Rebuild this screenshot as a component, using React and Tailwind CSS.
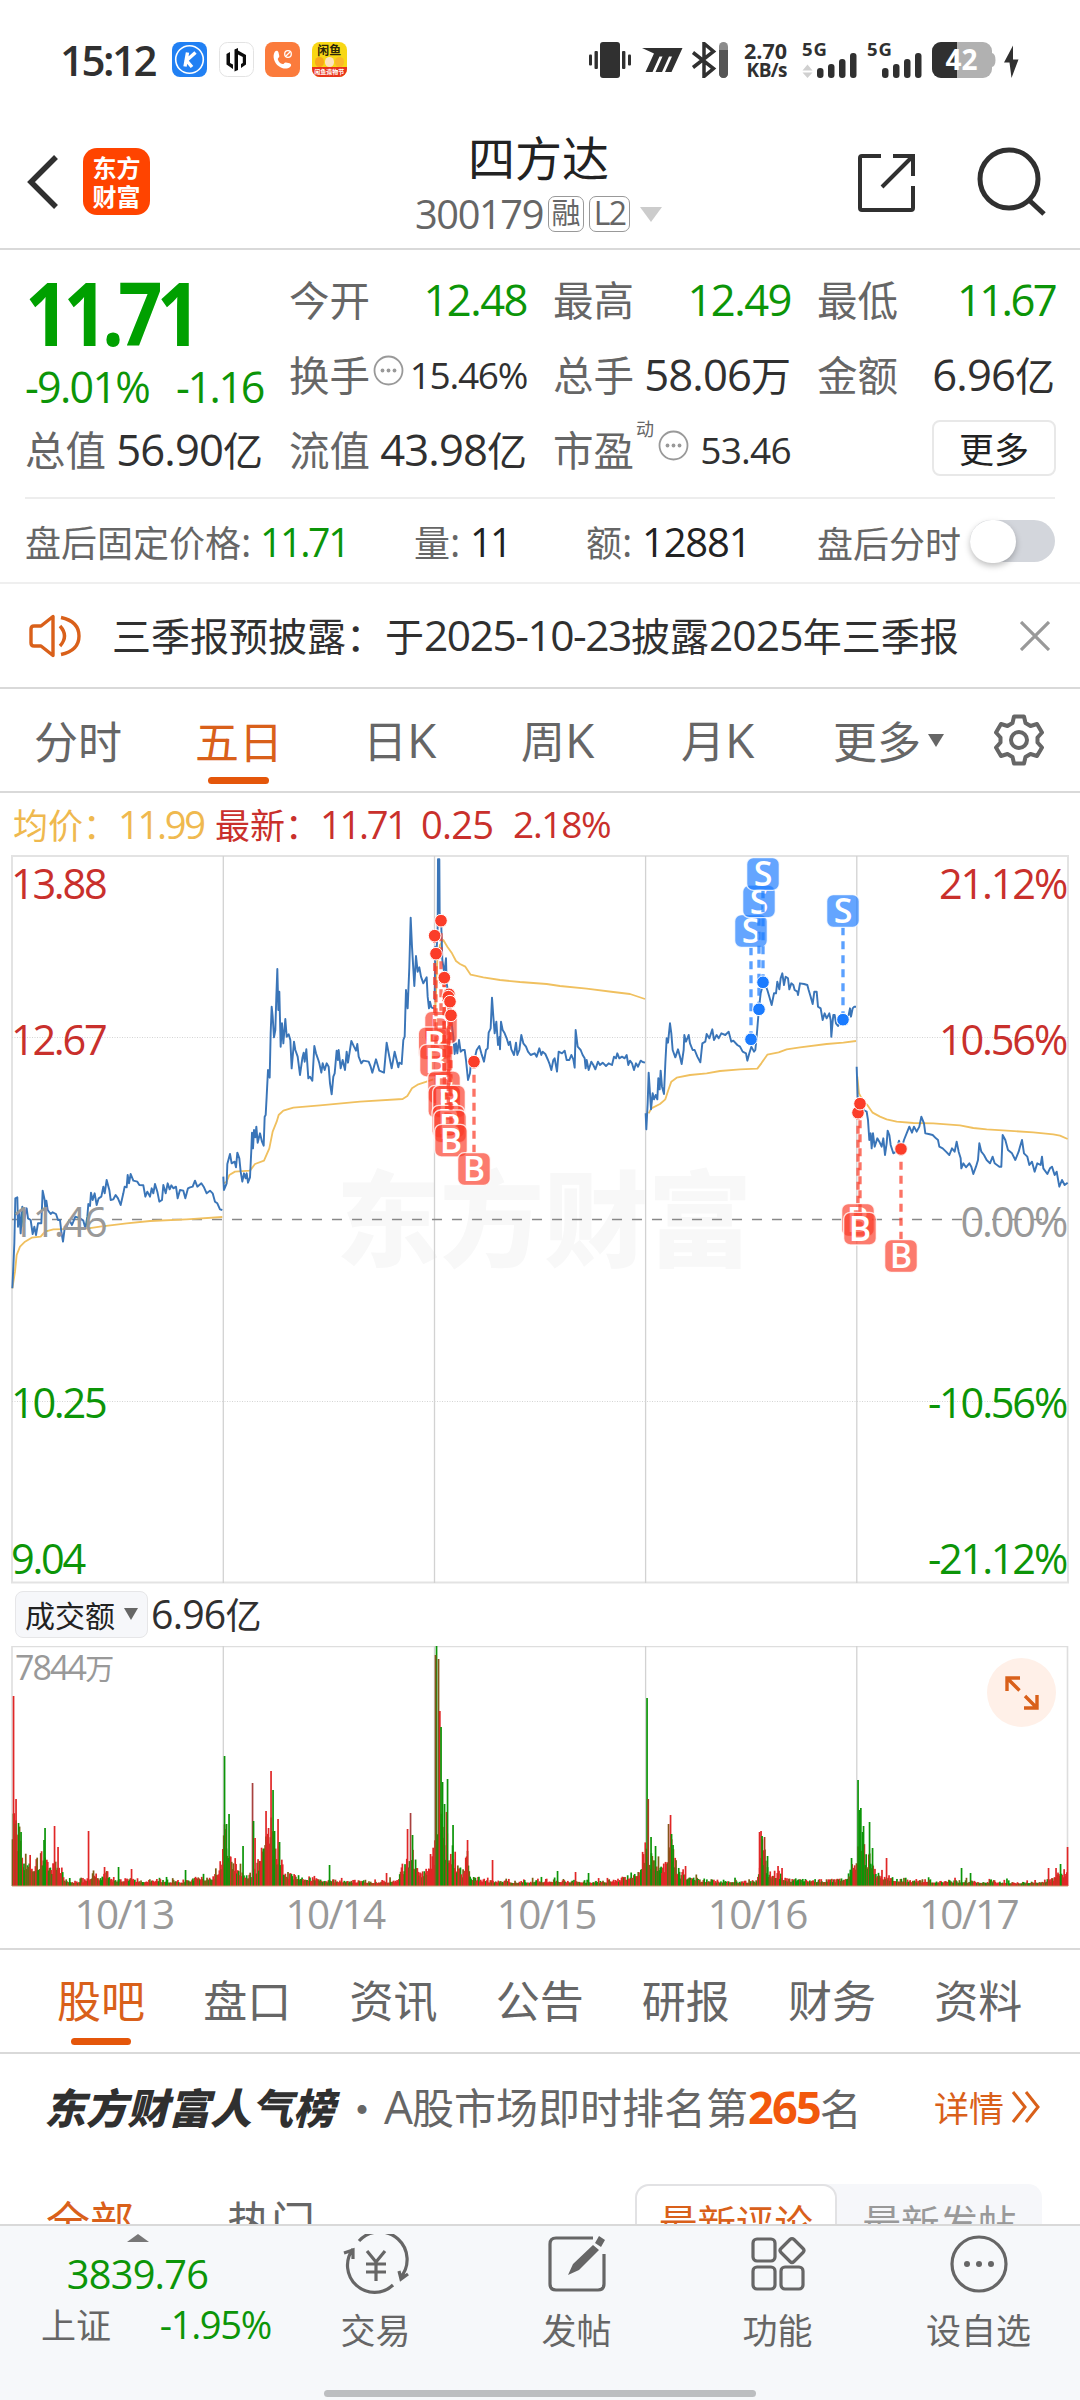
import React from 'react';
import clsx from 'clsx';

// Chart data, [x, y] pairs in chart units (3 units = 1px)
const PRICE = [
  [37,1315,40,1250,43,1180,46,1045,52,1042,54,1130,58,1085,62,1150,67,1070,71,1130,76,1090,80,1075,84,1105,92,1110,98,1152,103,1130,108,1155,114,1120,124,1120,128,1022,134,1050,136,1080,139,1052,143,1080,152,1092,158,1087,168,1092,174,1110,180,1110,184,1145,189,1175,194,1135,200,1130,208,1110,216,1125,226,1100,240,1105,250,1112,256,1135,262,1100,265,1062,270,1068,273,1028,278,1050,284,1030,290,1065,296,1045,304,1040,310,1010,314,1030,320,990,328,1020,332,1050,340,1048,347,1035,354,1045,362,1065,370,1030,374,1010,380,1012,383,975,387,1000,392,972,400,992,412,995,418,1005,430,1006,436,1040,442,1025,450,1040,455,1015,460,1030,465,1002,472,1025,478,1055,486,1050,490,1005,497,1030,503,1000,509,1018,514,1006,520,1015,528,1010,533,1045,540,1020,550,1022,556,1045,564,1015,570,1012,578,1010,585,992,592,1010,604,1000,612,1012,620,1030,630,1022,638,1030,645,1055,652,1060,660,1078,667,1080],
  [670,980,672,1020,680,1000,682,942,690,912,695,940,704,935,708,952,712,908,718,925,722,965,727,995,732,970,737,985,740,970,744,998,750,982,754,900,756,848,759,895,762,840,766,862,769,830,773,878,780,850,786,875,791,887,794,800,797,795,800,740,804,660,809,683,812,550,815,470,818,500,822,562,826,540,829,440,832,357,835,480,838,425,842,590,846,520,850,580,856,507,860,560,866,553,871,570,875,655,882,575,886,600,893,620,900,675,907,625,911,608,914,635,919,598,925,685,930,680,937,692,943,588,948,610,955,630,958,640,964,668,968,640,974,660,980,640,986,650,990,700,995,733,1000,680,1004,670,1010,602,1014,630,1016,600,1022,655,1028,630,1035,660,1040,605,1044,638,1054,573,1062,590,1068,602,1072,582,1076,620,1084,640,1090,632,1106,635,1112,650,1117,668,1128,628,1138,662,1152,668,1160,578,1168,620,1175,655,1184,605,1190,630,1195,652,1198,638,1205,642,1210,570,1214,560,1218,420,1223,475,1228,350,1232,203,1236,290,1243,408,1248,318,1253,365,1258,352,1263,380,1270,400,1280,382,1283,440,1287,475,1290,455,1294,472,1302,475],
  [1304,450,1306,290,1310,300,1313,230,1314,28,1318,28,1319,190,1323,200,1327,330,1333,370,1338,325,1340,400,1345,430,1350,470,1355,520,1360,560,1364,612,1368,580,1372,610,1377,570,1382,605,1388,600,1394,600,1398,630,1404,690,1410,670,1414,620,1422,634,1430,600,1438,588,1444,610,1452,635,1458,600,1463,595,1466,548,1472,535,1476,443,1480,500,1484,550,1489,515,1494,585,1499,560,1500,598,1503,515,1508,540,1514,550,1520,565,1526,585,1530,575,1534,598,1542,615,1548,578,1552,615,1558,600,1564,555,1570,580,1578,590,1584,605,1592,615,1604,610,1610,620,1618,595,1624,615,1628,605,1636,612,1644,630,1648,640,1654,660,1660,630,1664,625,1671,665,1676,605,1686,610,1694,602,1700,630,1708,630,1714,615,1720,628,1724,653,1727,540,1733,590,1742,600,1748,615,1754,625,1757,655,1760,630,1766,660,1774,635,1780,645,1786,658,1794,635,1800,645,1808,638,1818,648,1826,640,1836,645,1842,620,1848,625,1852,610,1858,625,1866,620,1874,625,1880,615,1885,645,1890,632,1896,640,1902,660,1908,640,1914,650,1922,632,1928,636,1935,638],
  [1937,790,1939,838,1943,760,1946,668,1950,730,1953,778,1958,730,1962,748,1967,735,1972,748,1975,685,1979,718,1982,662,1986,710,1992,732,1996,640,2000,565,2004,578,2010,520,2014,550,2018,600,2026,622,2034,598,2040,620,2045,642,2051,600,2053,555,2058,575,2066,555,2070,580,2078,600,2084,600,2092,620,2101,637,2107,580,2116,575,2120,552,2128,565,2137,538,2142,570,2150,555,2156,565,2164,550,2176,555,2186,545,2194,575,2200,572,2212,585,2220,590,2228,605,2238,610,2242,632,2248,610,2254,590,2262,605,2266,600,2270,560,2274,510,2278,465,2282,430,2286,415,2290,380,2294,400,2302,420,2308,440,2315,465,2322,430,2328,430,2332,395,2338,418,2342,385,2347,370,2352,405,2357,380,2364,385,2368,418,2374,400,2380,405,2384,420,2392,425,2394,435,2400,400,2412,402,2422,405,2426,420,2432,440,2438,462,2443,425,2450,425,2454,470,2462,475,2468,510,2474,490,2480,505,2488,490,2492,510,2494,560,2498,515,2500,495,2504,495,2508,520,2514,528,2520,515,2529,508,2540,505,2546,495,2550,475,2553,500,2558,475,2563,470,2568,470],
  [2570,650,2573,740,2580,762,2590,780,2600,785,2604,810,2608,870,2612,850,2615,895,2619,850,2624,890,2632,865,2638,875,2645,890,2650,865,2655,915,2660,880,2663,842,2668,855,2672,885,2680,910,2688,905,2697,872,2704,897,2712,870,2722,845,2728,830,2736,848,2742,830,2750,845,2758,830,2764,800,2772,820,2776,850,2786,852,2798,855,2808,865,2814,870,2818,890,2828,895,2838,905,2848,915,2856,895,2864,905,2870,875,2876,905,2882,925,2884,955,2890,940,2898,952,2908,940,2914,950,2920,972,2928,950,2934,930,2938,880,2944,905,2952,915,2960,930,2970,940,2978,920,2984,940,2998,950,3004,950,3008,855,3016,870,3024,900,3036,910,3046,930,3056,905,3060,890,3066,870,3072,910,3082,920,3088,945,3096,935,3104,965,3112,940,3122,945,3126,920,3130,955,3142,972,3150,955,3156,950,3164,975,3170,965,3178,1010,3186,990,3194,1005,3203,998],
];

const AVERAGE = [
  [37,1315,45,1265,50,1215,60,1190,75,1175,95,1163,122,1160,135,1145,160,1138,260,1136,300,1130,380,1120,450,1113,560,1108,667,1101],
  [672,1000,680,995,688,975,705,965,750,962,765,942,792,932,808,895,818,845,830,815,836,795,850,782,880,773,960,766,1080,755,1208,747,1222,738,1236,715,1255,703,1300,688],
  [1306,480,1312,330,1320,285,1330,270,1342,290,1356,310,1368,333,1380,342,1396,350,1412,374,1450,382,1500,390,1560,396,1640,402,1680,408,1760,416,1840,426,1890,432,1935,447],
  [1946,790,1954,775,1980,762,1996,748,2005,720,2014,695,2030,683,2070,675,2120,670,2160,663,2220,658,2272,656,2284,640,2302,614,2336,607,2360,598,2400,592,2480,582,2530,578,2568,573],
  [2572,680,2577,730,2590,755,2602,765,2618,788,2640,800,2660,808,2690,815,2740,819,2800,820,2880,826,2920,834,2960,838,3020,842,3100,847,3160,853,3180,857,3203,867],
];

// [x, dot y, badge y]
const BUYS = [
  [1323, 212, 533], [1304, 257, 580], [1308, 311, 632], [1332, 383, 712], [1333, 383, 755], [1347, 433, 755],
  [1345, 440, 815], [1350, 455, 829], [1353, 496, 872], [1422, 635, 957], [2574, 788, 1110], [2580, 761, 1136], [2703, 897, 1218],
];
const SELLS = [[2253, 568, 243], [2277, 478, 154], [2289, 397, 72], [2529, 509, 183]];

// Turnover: general level along the axis, then the bars that stand out
const LEVELS = [
  [12,95],[16,85],[20,50],[24,33],[36,28],[44,40],[48,18],[52,20],[58,30],[62,14],[66,5],[80,4],[88,8],[92,16],[98,8],[104,14],[108,14],[112,6],[130,8],[140,5],[160,6],[180,4],[195,8],[210,9],[214,14],[220,28],[222,50],[226,70],[230,40],[236,26],[242,18],[250,12],[258,30],[264,50],[270,70],[276,50],[280,28],[288,14],[300,10],[320,6],[350,5],[380,4],[398,6],[403,25],[412,40],[416,20],[424,14],[434,45],[440,120],[444,45],[450,50],[456,28],[462,14],[466,40],[471,10],[490,5],[520,4],[550,6],[600,4],[620,7],[630,14],[640,22],[645,50],[650,35],[656,28],[664,25],[670,60],[674,30],[680,14],[700,6],[740,4],[757,5],[760,50],[764,40],[768,14],[778,14],[790,6],[840,6],[848,14],[857,40],[862,50],[868,30],[872,22],[880,12],[900,6],[930,5],[960,5],[980,4],[1020,3],[1050,6],[1060,15],[1067,20],
];
const UP = '#e02727';
const DOWN = '#0c9508';
const SPIKES = [
  [13,190,UP],[15.5,87,UP],[18,63,DOWN],[20.5,54,DOWN],[43.5,46,DOWN],[44.5,58,DOWN],[54,60,UP],[57.5,39,UP],[88,55,UP],[104,19,UP],[118,19,DOWN],[131,17,UP],[185,16,DOWN],
  [224,130,DOWN],[226,62,DOWN],[228.5,72,DOWN],[242.5,40,DOWN],[252,103,'#a8413f'],[253,65,DOWN],[254.5,48,UP],[265.5,75,UP],[268,58,UP],[270.5,115,UP],[272.5,96,DOWN],[274,55,DOWN],[277.5,67,UP],[279,44,DOWN],[329,21,DOWN],[386,13,UP],[407,57,UP],[410,73,'#a8413f'],[412,51,DOWN],
  [436,240,DOWN],[435,231,'#86551c'],[438,227,'#86551c'],[439.3,175,UP],[440.5,159,DOWN],[442,104,DOWN],[444,82,DOWN],[446,74,UP],[447,107,DOWN],[452.5,61,DOWN],[467,46,UP],[492,26,UP],[557,15,DOWN],[575,14,UP],[588,13,DOWN],
  [646.5,188,DOWN],[647.7,87,'#b23a22'],[650.5,49,DOWN],[655,40,DOWN],[668,62,'#86551c'],[670,71,UP],[671,52,DOWN],[672.5,41,DOWN],[685,20,UP],
  [759,54,UP],[760.5,55,UP],[761.5,50,DOWN],[764,49,'#b23a22'],[767,30,DOWN],[777.5,20,UP],[781.5,18,UP],
  [851,28,DOWN],[857.5,106,DOWN],[859,76,DOWN],[860.3,78,DOWN],[862,54,DOWN],[863,60,DOWN],[869,64,DOWN],[872,38,DOWN],[886,28,UP],[961,18,DOWN],[970,13,DOWN],[1048,18,UP],[1055.5,18,UP],[1060,22,DOWN],[1067,39,UP],
];

function levelAt(x) {
  const i = Math.max(1, LEVELS.findIndex(p => p[0] >= x));
  const [x0, y0] = LEVELS[i - 1];
  const [x1, y1] = LEVELS[i];
  return y0 + ((y1 - y0) * (x - x0)) / (x1 - x0);
}

function buildBars() {
  const bars = [];
  let seed = 7;
  const rand = () => {
    seed = (seed * 16807) % 2147483647;
    return seed / 2147483647;
  };
  for (let x = 12; x < 1067; x += 0.88) {
    const r = rand();
    const extra = rand() > 0.9 ? 4 : 1;
    const h = Math.max(2, levelAt(x) * (0.45 + 0.6 * r * r) + extra);
    bars.push([x, h, rand() > 0.52 ? UP : rand() > 0.45 ? DOWN : '#7b5f14']);
  }
  return bars.concat(SPIKES);
}
const BARS = buildBars();

const hasCjk = s => /[\u3000-\u9fff\uff00-\uffef]/.test(s);

// Runs with several narrow ones are set closer
function tracking(s) {
  const ones = s.split('1').length - 1;
  if (ones > 1 && s.length < 7) return 'tracking-[-0.06em]';
  return ones > 0 ? 'tracking-[-0.035em]' : 'tracking-[-0.02em]';
}

// Latin runs are set a little larger than the Chinese beside them
function Mix({ children, className }) {
  const parts = String(children).match(/[\u3000-\u9fff\uff00-\uffef]+|[^\u3000-\u9fff\uff00-\uffef]+/g) || [];
  return (
    <span className={clsx('whitespace-pre leading-none', className)}>
      {parts.map((p, i) =>
        hasCjk(p) ? p : <span key={i} className={clsx("font-['Open_Sans',sans-serif] text-[1.09em]", tracking(p))}>{p}</span>
      )}
    </span>
  );
}

function StatusBar() {
  return (
    <div className="h-[121px] shrink-0 flex items-start pt-[42px] pl-[60px] pr-[61px] text-[#303030]">
      <span className="w-[112px] font-['Open_Sans',sans-serif] font-semibold text-[42px] leading-[35px] tracking-[-0.06em]">15:12</span>
      <div className="flex gap-[11.6px]">
        <svg width="35" height="35" viewBox="0 0 35 35">
          <rect width="35" height="35" rx="8" fill="#2180f3" />
          <circle cx="17.5" cy="17.5" r="13.8" fill="none" stroke="#fff" strokeWidth="1.600" />
          <path d="M15.500 10.500 13 24.500M23.500 10.500 14.500 18.500l5.500 6.500" fill="none" stroke="#fff" strokeWidth="3.400" />
        </svg>
        <svg width="35" height="35" viewBox="0 0 35 35">
          <rect x=".5" y=".5" width="34" height="34" rx="8" fill="#fff" stroke="#e3e3e3" />
          <path d="M7.500 12 11 10v11l3 1.500V27l-6.500-4.500zM15.500 7.500 19 6v22l-3.500 1.500zM19 8.500l8 4.500v9.500l-5 3.500v-4l1.800-1V15L19 12.500z" fill="#0c0c0c" />
        </svg>
        <svg width="35" height="35" viewBox="0 0 35 35">
          <rect width="35" height="35" rx="8" fill="#fb7b3c" />
          <path d="M10 9.500c1.500-1.500 3-1 3.500 1l.8 3.500c.3 1.500-1.800 2-1.500 3.200.6 2.600 2.500 4.400 4.800 4.800 1.300.3 1.700-1.800 3.200-1.600l3.800.8c2 .5 2 2.600.5 3.800-3 2.400-7.600 2-11.200-.7C9 21 7 14 10 9.500z" fill="#fff" />
          <circle cx="23" cy="12" r="3.300" fill="none" stroke="#fff" strokeWidth="1.300" />
          <path d="M21 14l4-4" stroke="#fff" strokeWidth="1.200" />
        </svg>
        <div className="w-[35px] h-[35px] rounded-[8px] overflow-hidden bg-[#f8d715] flex flex-col items-center leading-none">
          <span className="mt-[2px] text-[12px] font-bold text-[#2d2608]">闲鱼</span>
          <div className="flex gap-[1px] mt-px">
            <div className="w-[9px] h-[10px] rounded-full bg-[#f9a61c]" />
            <div className="w-[9px] h-[10px] rounded-full bg-[#fde3c0]" />
            <div className="w-[9px] h-[10px] rounded-full bg-[#fbb72a]" />
          </div>
          <span className="w-full h-[10px] bg-[#e8331c] text-center text-[6px] leading-[9px] font-bold text-white whitespace-nowrap">闲鱼造物节</span>
        </div>
      </div>

      <svg className="ml-auto" width="140" height="36" viewBox="588 42 140 36" fill="#303030">
        <rect x="600" y="42" width="20" height="36" rx="3" />
        <rect x="589" y="54.500" width="3" height="11" rx="1" />
        <rect x="594.500" y="51" width="3.400" height="18" rx="1" />
        <rect x="622" y="51" width="3.400" height="18" rx="1" />
        <rect x="628" y="54.500" width="3" height="11" rx="1" />
        <path d="M642 48h40.500l-11 24h-6.500l7-15.500h-3l-7 15.500h-6.500l7-15.500h-3l-7 15.500h-7l8.500-18.500z" />
        <path d="M693 52.500l20.500 16L704 76.500V43.500l9.500 8L693 67.500" fill="none" stroke="#303030" strokeWidth="3.500" />
        <rect x="719" y="42" width="9" height="36" rx="4.500" fill="#8b8b8b" />
        <path d="M719 50h9v23.500a4.500 4.500 0 0 1-9 0z" fill="#555" />
      </svg>
      <div className="w-[45px] ml-[14px] flex flex-col items-end font-['Open_Sans',sans-serif] font-bold text-[21.500px] leading-[17px]">
        <span>2.70</span>
        <span className="text-[19px] leading-[23px] tracking-[-0.03em]">KB/s</span>
      </div>
      {[true, false].map(arrows => (
        <svg key={String(arrows)} className={clsx('overflow-visible', arrows ? 'ml-[15px]' : 'ml-[9px]')} width="56" height="36" viewBox="803 42 56 36" fill="#303030">
          <text x="803" y="56" fontSize="18.500" fontWeight="700" fontFamily="Open Sans" textLength="25">5G</text>
          {arrows && <path d="M808.500 64.500l5 6h-10zM808.500 78l5-5.500h-10z" fill="#d0d0d0" />}
          <rect x="818" y="68" width="6.500" height="10" rx="3" />
          <rect x="829" y="64" width="6.500" height="14" rx="3" />
          <rect x="840" y="59" width="6.500" height="19" rx="3" />
          <rect x="851" y="53" width="6.500" height="25" rx="3" />
        </svg>
      ))}
      <svg className="ml-[9px] shrink-0 overflow-visible" width="87" height="36" viewBox="933 42 87 36">
        <rect x="933" y="42" width="60" height="36" rx="9" fill="#b1b1b1" />
        <path d="M993 53q3.500 1 3.500 7t-3.500 7z" fill="#b1b1b1" />
        <path d="M958 42v36h-16a9 9 0 0 1-9-9V51a9 9 0 0 1 9-9z" fill="#303030" />
        <text x="962.500" y="70" textAnchor="middle" fontSize="28" fontWeight="700" fontFamily="Open Sans" fill="#fff">42</text>
        <path d="M1014 45.500l-9 17h5.500l2 15.500 7-18.500h-5.500z" fill="#303030" />
      </svg>
    </div>
  );
}

function Header() {
  return (
    <div className="h-[129px] shrink-0 flex items-center pl-[26px] pr-[34px] border-b-2 border-[#d9d9d9]">
      <svg width="34" height="56" viewBox="0 0 34 56" className="mt-[-5px]">
        <path d="M30 3 5 28l25 25" fill="none" stroke="#303030" strokeWidth="5.500" />
      </svg>
      <div className="w-[67px] h-[67px] ml-[23px] mt-[-7px] rounded-[14px] bg-[#ff4400] flex flex-col items-center justify-center text-white text-[24px] leading-[29px] font-bold">
        <span>东方</span>
        <span>财富</span>
      </div>
      <div className="flex-1 flex flex-col items-center pl-[69px]">
        <span className="mt-[-9px] text-[47px] leading-[60px] text-[#222]">四方达</span>
        <div className="flex items-center gap-[5px] pt-[8px] text-[#666]">
          <Mix className="text-[36.500px]">300179</Mix>
          <span className="w-[36px] h-[36px] border-[1.5px] border-[#999] rounded-[7px] text-[29px] leading-[29px] text-center">融</span>
          <span className="w-[41px] h-[36px] border-[1.5px] border-[#999] rounded-[7px] font-['Open_Sans',sans-serif] text-[32px] leading-[31px] tracking-[-0.05em] text-center">L2</span>
          <svg className="ml-[5px]" width="22" height="15" viewBox="0 0 22 15"><path d="M0 0h22L11 15z" fill="#ccc" /></svg>
        </div>
      </div>
      <svg width="188" height="68" viewBox="858 147 188 68" fill="none" stroke="#303030" strokeWidth="4" className="mt-[-6px] overflow-visible">
        <path d="M881 155h-19q-2 0-2 2v50q0 2 2 2h49q2 0 2-2v-22M893 155h20v20M913 155l-31 31" />
        <circle cx="1009" cy="178" r="29" strokeWidth="5" />
        <path d="M1030 200l14 13" strokeWidth="5" />
      </svg>
    </div>
  );
}

function Hint() {
  return (
    <svg width="31" height="31" viewBox="0 0 31 31" className="shrink-0 ml-[3px] -translate-y-[4px]">
      <circle cx="15.500" cy="15.500" r="14" fill="none" stroke="#999" strokeWidth="1.800" />
      <circle cx="9.500" cy="15.500" r="1.900" fill="#999" />
      <circle cx="15.500" cy="15.500" r="1.900" fill="#999" />
      <circle cx="21.500" cy="15.500" r="1.900" fill="#999" />
    </svg>
  );
}

function Stat({ label, value, green, hint, sup }) {
  return (
    <div className="h-[75px] flex items-center whitespace-nowrap">
      <span className="text-[40.500px] leading-none text-[#666]">{label}</span>
      {sup && <span className="text-[18px] leading-none text-[#666] self-start mt-[7px] ml-[2px] mr-px">{sup}</span>}
      {hint && <Hint />}
      <Mix className={clsx('ml-auto', hint ? 'text-[34px]' : 'text-[40px]', green ? 'text-[#0c9508]' : 'text-[#303030]')}>{value}</Mix>
    </div>
  );
}

function Quote() {
  return (
    <div className="h-[249px] shrink-0 pt-[12px] mx-[25px] grid grid-cols-4 gap-x-[26px] border-b-2 border-[#ededed]">
      <div>
        <div className="h-[96px] flex items-center pt-[3px] origin-left scale-x-[0.88] font-['Open_Sans',sans-serif] font-bold text-[88px] leading-none tracking-[-0.075em] text-[#00a000]">11.71</div>
        <div className="h-[54px] flex items-center justify-between pt-[2px] text-[#0c9508] text-[43px] leading-none font-['Open_Sans',sans-serif]">
          <span className="tracking-[-0.04em]">-9.01%</span>
          <span className="tracking-[-0.055em]">-1.16</span>
        </div>
        <Stat label="总值" value="56.90亿" />
      </div>
      <div>
        <Stat label="今开" value="12.48" green />
        <Stat label="换手" value="15.46%" hint />
        <Stat label="流值" value="43.98亿" />
      </div>
      <div>
        <Stat label="最高" value="12.49" green />
        <Stat label="总手" value="58.06万" />
        <Stat label="市盈" value="53.46" hint sup="动" />
      </div>
      <div>
        <Stat label="最低" value="11.67" green />
        <Stat label="金额" value="6.96亿" />
        <div className="h-[75px] flex items-center justify-end">
          <button className="w-[124px] h-[56px] mt-[-4px] mr-[-1px] border-2 border-[#e8e8e8] rounded-[8px] text-[35px] leading-none text-[#222]">更多</button>
        </div>
      </div>
    </div>
  );
}

function AfterHours() {
  return (
    <div className="h-[85px] shrink-0 flex items-center pl-[25px] pr-[25px] pt-[2px] border-b-2 border-[#efefef] text-[36px] text-[#666]">
      <Mix className="w-[235px]">盘后固定价格:</Mix>
      <Mix className="w-[154px] text-[#0c9508]">11.71</Mix>
      <Mix className="w-[56px]">量:</Mix>
      <Mix className="w-[116px] text-[#222]">11</Mix>
      <Mix className="w-[56px]">额:</Mix>
      <span className="w-[175px] font-['Open_Sans',sans-serif] text-[40px] leading-none tracking-[-0.03em] text-[#222]">12881</span>
      <span className="leading-none">盘后分时</span>
      <div className="w-[85px] h-[42px] ml-auto mt-[-2px] rounded-full bg-[#d3d6dc]">
        <div className="w-[46px] h-[43px] rounded-full bg-white shadow-[0_3px_6px_rgba(0,0,0,0.25)]" />
      </div>
    </div>
  );
}

function Notice() {
  return (
    <div className="h-[105px] shrink-0 flex items-center pl-[28px] pr-[30px] border-b-2 border-[#d9d9d9]">
      <svg width="54" height="46" viewBox="0 0 54 46" fill="none" stroke="#d9601a" strokeWidth="3.400">
        <path d="M25 3.500v39L13 33H6q-3 0-3-3V16q0-3 3-3h7z" strokeLinejoin="round" />
        <path d="M32 13q9 10 0 20M33 4.500q18 4 18 18.500T33 41.500" />
      </svg>
      <Mix className="ml-[30px] text-[39px] text-[#303030]">三季报预披露：于2025-10-23披露2025年三季报</Mix>
      <svg className="ml-auto" width="30" height="30" viewBox="0 0 30 30"><path d="M1 1l28 28M29 1 1 29" stroke="#999" strokeWidth="3.200" /></svg>
    </div>
  );
}

function PeriodTabs() {
  return (
    <div className="h-[104px] shrink-0 flex items-center pl-[34px] pr-[35px] border-b-2 border-[#d9d9d9] text-[44px] text-[#666]">
      <span className="w-[161px] leading-none">分时</span>
      <div className="w-[168px] h-full flex flex-col">
        <span className="h-[88px] flex items-center pt-[14px] text-[#d9601a] leading-none">五日</span>
        <div className="w-[61px] h-[7px] ml-[13px] rounded-full bg-[#e4560a]" />
      </div>
      <Mix className="w-[158px]">日K</Mix>
      <Mix className="w-[160px]">周K</Mix>
      <Mix className="w-[152px]">月K</Mix>
      <span className="leading-none">更多</span>
      <svg className="ml-[7px]" width="16" height="13" viewBox="0 0 16 13"><path d="M0 0h16L8 13z" fill="#666" /></svg>
      <svg className="ml-auto" width="52" height="52" viewBox="0 0 52 52" fill="none" stroke="#666" strokeWidth="4" strokeLinejoin="round">
        <path d="M21 2.500h10l1.500 6.500 5 3 6.500-2 5 8.500-4.500 5v5l4.500 5-5 8.500-6.500-2-5 3-1.500 6.500H21L19.500 43l-5-3L8 42l-5-8.500 4.500-5v-5L3 18.500 8 10l6.500 2 5-3z" />
        <circle cx="26" cy="26" r="8" />
      </svg>
    </div>
  );
}

function Legend() {
  return (
    <div className="h-[61px] shrink-0 flex items-center pt-px pl-[13px] text-[35px] text-[#c9302c]">
      <Mix className="w-[202px] text-[#efb94f]">均价：11.99</Mix>
      <Mix className="w-[206px]">最新：11.71</Mix>
      <Mix className="w-[92px]">0.25</Mix>
      <Mix className="text-[34px]">2.18%</Mix>
    </div>
  );
}

function AxisLabel({ x, y, fill, end, children }) {
  return (
    <text x={x} y={y} fill={fill} fontSize="41.500" fontFamily="Open Sans" letterSpacing={end ? -2.2 : -2.3} textAnchor={end ? 'end' : 'start'}>
      {children}
    </text>
  );
}

function Marker({ x, dot, y, letter, color }) {
  const edge = y > dot ? y - 49 : y + 49;
  return (
    <g>
      <path d={`M${x} ${edge}V${dot}`} stroke={color} strokeOpacity="0.72" strokeWidth="10" strokeDasharray="24 18" />
      <rect x={x - 49} y={y - 49} width="98" height="98" rx="20" fill={color} fillOpacity="0.68" stroke="#fff" strokeOpacity="0.8" strokeWidth="4" />
      <text x={x} y={y + 37} textAnchor="middle" fontSize="102" fontWeight="600" fontFamily="Open Sans" fill="#fff">{letter}</text>
    </g>
  );
}

function PriceChart() {
  return (
    <svg className="block shrink-0" width="1080" height="732" viewBox="0 854 1080 732">
      <text x="336" y="1259" fontSize="104" fontWeight="900" fontFamily="Noto Sans CJK SC" fill="#f8f8f8">东方财富</text>
      <rect x="12" y="856" width="1056" height="726.500" fill="none" stroke="#e3e3e3" strokeWidth="2" />
      {[223.3, 434.5, 645.6, 856.8].map(x => <path key={x} d={`M${x} 856v727`} stroke="#d2d2d2" strokeWidth="1.300" />)}
      {[1037.5, 1401.5].map(y => <path key={y} d={`M12 ${y}h1056`} stroke="#d4d4d4" strokeDasharray="1 1.500" />)}
      <path d="M12 1219.500h1056" stroke="#888" strokeWidth="1.500" strokeDasharray="10 10" />
      <g transform="translate(0 850) scale(.33333)" fill="none" strokeLinejoin="round">
        {AVERAGE.map((p, i) => <polyline key={i} points={p.join(' ')} stroke="#f0c05f" strokeWidth="5.500" />)}
        {PRICE.map((p, i) => <polyline key={i} points={p.join(' ')} stroke="#3a75b8" strokeWidth="5.800" />)}
        {BUYS.map(([x, dot, y], i) => <Marker key={i} x={x} dot={dot} y={y} letter="B" color="#fb3d29" />)}
        {SELLS.map(([x, dot, y], i) => <Marker key={i} x={x} dot={dot} y={y} letter="S" color="#1a7bff" />)}
        {BUYS.map(([x, y], i) => <circle key={i} cx={x} cy={y} r="19" fill="#fb3d29" stroke="#fff" strokeWidth="3" />)}
        {SELLS.map(([x, y], i) => <circle key={i} cx={x} cy={y} r="19" fill="#1a7bff" stroke="#fff" strokeWidth="3" />)}
      </g>
      <AxisLabel x="11" y="898.500" fill="#c9302c">13.88</AxisLabel>
      <AxisLabel x="11" y="1054.500" fill="#c9302c">12.67</AxisLabel>
      <AxisLabel x="11" y="1237" fill="#999">11.46</AxisLabel>
      <AxisLabel x="11" y="1418" fill="#0c9508">10.25</AxisLabel>
      <AxisLabel x="11" y="1574" fill="#0c9508">9.04</AxisLabel>
      <AxisLabel end x="1066" y="898.500" fill="#c9302c">21.12%</AxisLabel>
      <AxisLabel end x="1066" y="1054.500" fill="#c9302c">10.56%</AxisLabel>
      <AxisLabel end x="1066" y="1237" fill="#999">0.00%</AxisLabel>
      <AxisLabel end x="1066" y="1418" fill="#0c9508">-10.56%</AxisLabel>
      <AxisLabel end x="1066" y="1574" fill="#0c9508">-21.12%</AxisLabel>
    </svg>
  );
}

function VolumeChart() {
  return (
    <div className="relative h-[364px] shrink-0 border-b-2 border-[#d9d9d9]">
      <div className="h-[60px] flex items-center pl-[15px] pb-[4px]">
        <div className="w-[133px] h-[47px] flex items-center pl-[9px] bg-[#f6f7fa] border-[1.5px] border-[#e6e6e8] rounded-[8px] text-[30px] leading-none text-[#222]">
          成交额
          <svg className="ml-[9px]" width="14" height="12" viewBox="0 0 14 12"><path d="M0 0h14L7 12z" fill="#666" /></svg>
        </div>
        <Mix className="ml-[3px] text-[36px] text-[#303030]">6.96亿</Mix>
      </div>
      <svg className="block" width="1080" height="296" viewBox="0 1646 1080 296">
        <path d="M12 1886V1646.500H1067.500V1886" fill="none" stroke="#dedede" strokeWidth="1.600" />
        {[223.3, 434.5, 645.6, 856.8].map(x => <path key={x} d={`M${x} 1646v240`} stroke="#d2d2d2" strokeWidth="1.300" />)}
        {BARS.map(([x, h, fill], i) => <rect key={i} x={x - 0.3} y={1886 - h} width="1.700" height={h} fill={fill} />)}
        <path d="M12 1886h1056" stroke="#cf8f6a" strokeWidth="1" />
        <text x="15" y="1680" fontSize="34" fontFamily="Open Sans" letterSpacing="-1.900" fill="#999">
          7844<tspan fontFamily="Noto Sans CJK SC" fontSize="29">万</tspan>
        </text>
        {['10/13', '10/14', '10/15', '10/16', '10/17'].map((d, i) => (
          <text key={d} x={124 + i * 211.1} y="1928.500" textAnchor="middle" fontSize="40.500" fontFamily="Open Sans" letterSpacing="-1.700" fill="#999">{d}</text>
        ))}
      </svg>
      <button className="absolute left-[987px] top-[72px] w-[69px] h-[69px] rounded-full bg-[#fff0e8] flex items-center justify-center">
        <svg width="34" height="34" viewBox="0 0 34 34" fill="none" stroke="#d9601a" strokeWidth="3.400">
          <path d="M2 15V2h13M2 2l12.500 12.500M32 19v13H19M32 32 20 20" />
        </svg>
      </button>
    </div>
  );
}

const SECTIONS = ['股吧', '盘口', '资讯', '公告', '研报', '财务', '资料'];

function SectionTabs() {
  return (
    <div className="h-[104px] shrink-0 flex px-[28px] border-b-2 border-[#d9d9d9] text-[44px] leading-none">
      {SECTIONS.map((s, i) => (
        <div key={s} className={clsx('w-[146.200px] flex flex-col items-center', i === 0 ? 'text-[#d9601a]' : 'text-[#666]')}>
          <span className="h-[88px] flex items-center pt-[10px]">{s}</span>
          {i === 0 && <div className="w-[60px] h-[7px] rounded-full bg-[#e4560a]" />}
        </div>
      ))}
    </div>
  );
}

function Forum() {
  return (
    <div className="h-[170px] shrink-0 overflow-hidden">
      <div className="h-[130px] flex items-center pl-[44px] pr-[38px] pb-[25px] text-[42px] text-[#666] leading-none whitespace-nowrap">
        <span className="w-[297px] text-[41.500px] font-black italic text-[#303030]">东方财富人气榜</span>
        <span className="w-[43px]">·</span>
        <Mix>A股市场即时排名第</Mix>
        <span className="font-['Open_Sans',sans-serif] font-bold text-[45px] tracking-[-0.04em] text-[#f2580c]">265</span>
        <span>名</span>
        <span className="ml-auto text-[35px] text-[#d9601a]">详情</span>
        <svg className="ml-[7px] mr-px" width="30" height="32" viewBox="0 0 30 32" fill="none" stroke="#d9601a" strokeWidth="3"><path d="M2 1l12 15L2 31M15 1l12 15-12 15" /></svg>
      </div>
      <div className="h-[100px] flex pl-[46px] pr-[38px] text-[44px] leading-none">
        <span className="w-[181px] pt-[14px] text-[#d9601a]">全部</span>
        <span className="pt-[14px] text-[#666]">热门</span>
        <div className="w-[407px] ml-auto rounded-[14px] bg-[#f6f7fa] flex text-[38.500px]">
          <span className="w-[202px] pt-[16px] text-center rounded-[14px] bg-white border-2 border-[#e2e2e4] text-[#d9601a]">最新评论</span>
          <span className="flex-1 pt-[18px] text-center text-[#999]">最新发帖</span>
        </div>
      </div>
    </div>
  );
}

function NavItem({ label, children }) {
  return (
    <div className="w-[201px] flex flex-col items-center">
      <svg className="mt-[8px]" width="66" height="60" viewBox="0 0 66 60" fill="none" stroke="#666" strokeWidth="3.200">{children}</svg>
      <span className="mt-[17px] text-[35px] leading-none text-[#666]">{label}</span>
    </div>
  );
}

function BottomNav() {
  return (
    <div className="flex-1 flex flex-col bg-[#f6f8fa] border-t-2 border-[#d9d9d9]">
      <div className="flex flex-1">
        <div className="w-[275px] flex flex-col items-center text-[#0c9508]">
          <svg className="mt-[8px]" width="22" height="8" viewBox="0 0 22 8"><path d="M11 0l11 8H0z" fill="#777" /></svg>
          <Mix className="mt-[12px] text-[36.500px]">3839.76</Mix>
          <div className="w-full pl-[41px] pr-[4px] mt-[11px] flex items-center justify-between text-[35px]">
            <span className="leading-none text-[#666]">上证</span>
            <Mix>-1.95%</Mix>
          </div>
        </div>
        <NavItem label="交易">
          <path d="M16 7A27 27 0 0 1 57 44M50 51A27 27 0 0 1 10 15M1 19l9-3v9M65 40l-7 5-2-8M24 17l9 11 9-11M33 28v19M23 30h20M23 38h20" />
        </NavItem>
        <NavItem label="发帖">
          <path d="M49 4H12q-6 0-6 6v40q0 6 6 6h42q6 0 6-6V20" />
          <path d="M55 2l6 4-4 7-6-4zM49 11l6 5-20 20-11 5 5-11z" fill="#666" stroke="none" />
        </NavItem>
        <NavItem label="功能">
          <rect x="8" y="5" width="22" height="22" rx="4" />
          <rect x="8" y="33" width="22" height="22" rx="4" />
          <rect x="36" y="33" width="22" height="22" rx="4" />
          <path d="M45 5.500q2-2 4 0l9 9q2 2 0 4l-9 9q-2 2-4 0l-9-9q-2-2 0-4z" />
        </NavItem>
        <NavItem label="设自选">
          <circle cx="33" cy="30" r="27" />
          <g fill="#666" stroke="none">
            <circle cx="21" cy="30" r="3" />
            <circle cx="33" cy="30" r="3" />
            <circle cx="45" cy="30" r="3" />
          </g>
        </NavItem>
      </div>
      <div className="w-[432px] h-[7px] mx-auto mb-[3px] rounded-full bg-[#bcbec0]" />
    </div>
  );
}

export default function App() {
  return (
    <div className="w-[1080px] h-[2400px] flex flex-col overflow-hidden bg-white font-['Noto_Sans_CJK_SC',sans-serif]">
      <StatusBar />
      <Header />
      <Quote />
      <AfterHours />
      <Notice />
      <PeriodTabs />
      <Legend />
      <PriceChart />
      <VolumeChart />
      <SectionTabs />
      <Forum />
      <BottomNav />
    </div>
  );
}
